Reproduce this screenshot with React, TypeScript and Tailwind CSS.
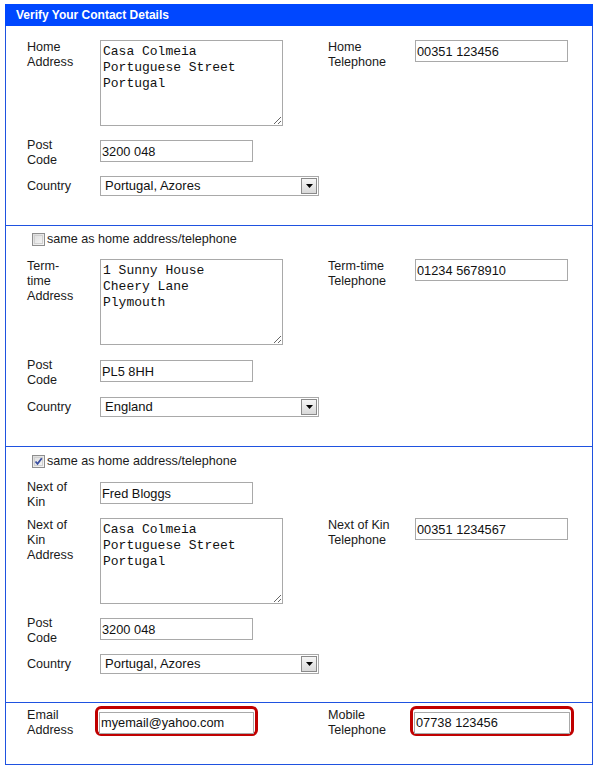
import React from "react";

const labelCls = "w-[73px] shrink-0 text-[12.6px] leading-[15px] text-[#1a1a1a]";
const rightLabelCls = "w-[87px] shrink-0 text-[12.6px] leading-[15px] text-[#1a1a1a]";
// two-line labels beside a single-line input: let them hang without stretching the row
const hangCls = "h-0 -mt-[2px] overflow-visible";

function TextInput({ value, w = "w-[153px]" }: { value: string; w?: string }) {
  return (
    <input
      type="text"
      defaultValue={value}
      className={`${w} h-[22px] border border-[#a9a9a9] bg-white px-[1px] text-[12.8px] text-[#111] outline-none`}
      style={{ fontFamily: "'Liberation Sans', Arial, sans-serif" }}
    />
  );
}

function Area({ lines }: { lines: string[] }) {
  return (
    <textarea
      defaultValue={lines.join("\n")}
      className="block w-[183px] h-[86px] border border-[#a9a9a9] bg-white px-[2px] pt-[3px] text-[13px] leading-[16px] text-[#111] resize outline-none"
      style={{ fontFamily: "'Liberation Mono', 'Courier New', monospace" }}
    />
  );
}

function Select({ value }: { value: string }) {
  return (
    <div className="flex h-[20px] w-[219px] items-center border border-[#a9a9a9] bg-white">
      <span className="flex-1 pl-[4px] text-[13px] leading-[18px] text-[#111]">{value}</span>
      <span className="mr-px flex h-[16px] w-[16px] items-center justify-center border border-[#8a8a8a] bg-gradient-to-b from-[#f6f6f6] to-[#d9d9d9]">
        <svg width="7" height="4" viewBox="0 0 7 4">
          <path d="M0 0H7L3.5 4Z" fill="#000" />
        </svg>
      </span>
    </div>
  );
}

function Check({ checked }: { checked?: boolean }) {
  return (
    <span className="relative flex h-[13px] w-[13px] items-center justify-center border border-[#8e8e8e] bg-gradient-to-br from-[#dcdcdc] to-[#f8f8f8]">
      <span className="absolute inset-[1px] border border-[#d0d0d0]" />
      {checked && (
        <svg width="9" height="9" viewBox="0 0 9 9" className="relative">
          <path d="M1.5 4.5L3.5 6.8L7.8 1.2" stroke="#3a4fa0" strokeWidth="1.8" fill="none" />
        </svg>
      )}
    </span>
  );
}

function CheckRow({ checked }: { checked?: boolean }) {
  return (
    <div className="flex h-[13px] items-center pl-[5px]">
      <Check checked={checked} />
      <span className="ml-[2px] text-[12.6px] leading-[15px] text-[#1a1a1a]">same as home address/telephone</span>
    </div>
  );
}

function Ring({ children }: { children: React.ReactNode }) {
  return (
    <div className="-my-[4px] -ml-[5px] h-[30px] rounded-[6px] border-[3px] border-[#c00000] p-px">{children}</div>
  );
}

export default function App() {
  return (
    <div
      className="ml-[5px] mt-[4px] w-[588px] border-x border-b border-[#1f52e0] bg-white"
      style={{ fontFamily: "'Liberation Sans', Arial, sans-serif" }}
    >
      <div className="-mx-px h-[22px] bg-[#0047ff] pl-[11px] text-[12px] font-bold leading-[22px] text-white">
        Verify Your Contact Details
      </div>

      {/* Home */}
      <div className="flex pl-[21px] pt-[14px] pb-[29px]">
        <div className="flex w-[301px] flex-col gap-[14px]">
          <div className="flex">
            <div className={labelCls}>Home<br />Address</div>
            <Area lines={["Casa Colmeia", "Portuguese Street", "Portugal"]} />
          </div>
          <div className="flex">
            <div className={`${labelCls} ${hangCls}`}>Post<br />Code</div>
            <TextInput value="3200 048" />
          </div>
          <div className="flex items-center">
            <div className={labelCls}>Country</div>
            <Select value="Portugal, Azores" />
          </div>
        </div>
        <div className="flex">
          <div className={rightLabelCls}>Home<br />Telephone</div>
          <TextInput value="00351 123456" />
        </div>
      </div>

      {/* Term-time */}
      <div className="border-t border-[#1f52e0] pl-[21px] pt-[7px] pb-[29px]">
        <CheckRow />
        <div className="mt-[13px] flex">
          <div className="flex w-[301px] flex-col gap-[15px]">
            <div className="flex">
              <div className={labelCls}>Term-<br />time<br />Address</div>
              <Area lines={["1 Sunny House", "Cheery Lane", "Plymouth"]} />
            </div>
            <div className="flex">
              <div className={`${labelCls} ${hangCls}`}>Post<br />Code</div>
              <TextInput value="PL5 8HH" />
            </div>
            <div className="flex items-center">
              <div className={labelCls}>Country</div>
              <Select value="England" />
            </div>
          </div>
          <div className="flex">
            <div className={rightLabelCls}>Term-time<br />Telephone</div>
            <TextInput value="01234 5678910" />
          </div>
        </div>
      </div>

      {/* Next of kin */}
      <div className="border-t border-[#1f52e0] pl-[21px] pt-[8px] pb-[28px]">
        <CheckRow checked />
        <div className="mt-[14px] flex flex-col gap-[14px]">
          <div className="flex">
            <div className={`${labelCls} ${hangCls}`}>Next of<br />Kin</div>
            <TextInput value="Fred Bloggs" />
          </div>
          <div className="flex">
            <div className="flex w-[301px] flex-col gap-[14px]">
              <div className="flex">
                <div className={labelCls}>Next of<br />Kin<br />Address</div>
                <Area lines={["Casa Colmeia", "Portuguese Street", "Portugal"]} />
              </div>
              <div className="flex">
                <div className={`${labelCls} ${hangCls}`}>Post<br />Code</div>
                <TextInput value="3200 048" />
              </div>
              <div className="flex items-center">
                <div className={labelCls}>Country</div>
                <Select value="Portugal, Azores" />
              </div>
            </div>
            <div className="flex">
              <div className={rightLabelCls}>Next of Kin<br />Telephone</div>
              <TextInput value="00351 1234567" />
            </div>
          </div>
        </div>
      </div>

      {/* Email / mobile */}
      <div className="flex border-t border-[#1f52e0] pl-[21px] pt-[7px] pb-[32px]">
        <div className="flex w-[301px]">
          <div className={`${labelCls} ${hangCls}`}>Email<br />Address</div>
          <Ring>
            <TextInput value="myemail@yahoo.com" w="w-[155px]" />
          </Ring>
        </div>
        <div className="flex">
          <div className={`${rightLabelCls} ${hangCls}`}>Mobile<br />Telephone</div>
          <Ring>
            <TextInput value="07738 123456" w="w-[156px]" />
          </Ring>
        </div>
      </div>
    </div>
  );
}
